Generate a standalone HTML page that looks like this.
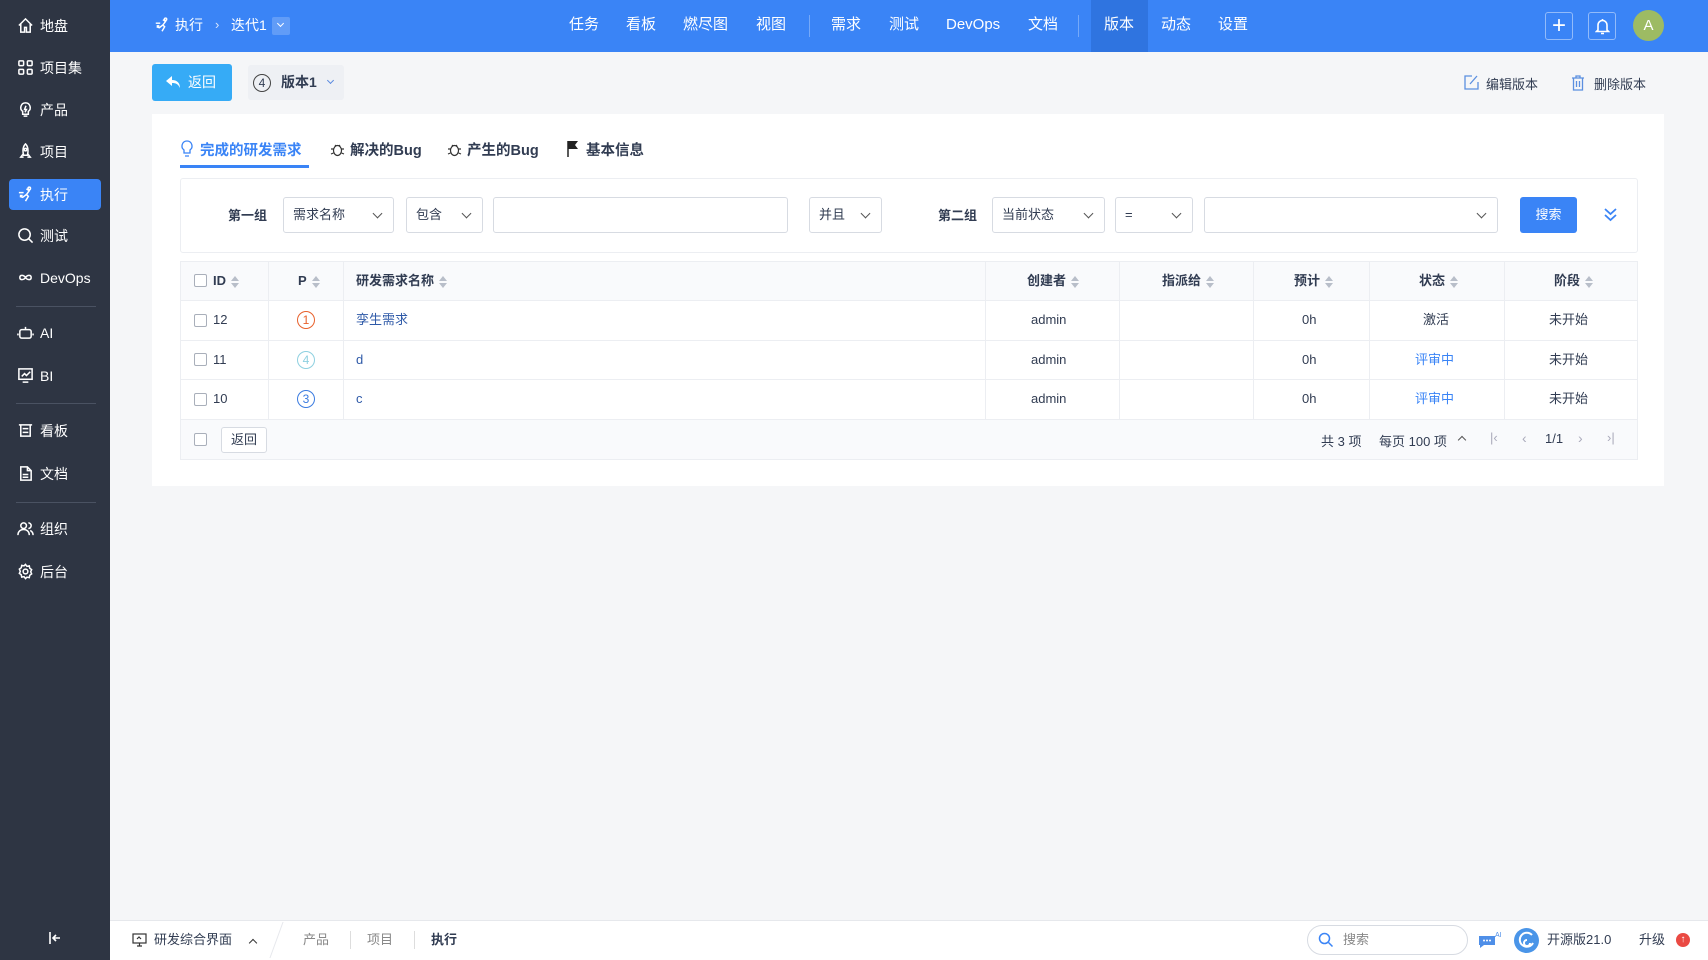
<!DOCTYPE html>
<html><head><meta charset="utf-8">
<style>
*{margin:0;padding:0;box-sizing:border-box}
body{width:1708px;height:960px;overflow:hidden;background:#f5f6f8;font-family:"Liberation Sans","Noto Sans CJK SC",sans-serif;font-size:14px;color:#313c52;position:relative}
.a{position:absolute}
#side{left:0;top:0;width:110px;height:960px;background:#2e3543}
.si{position:absolute;left:9px;width:92px;height:31px;color:#fff;font-size:14px;display:flex;align-items:center;padding-left:8px;gap:6px}
.si svg{width:17px;height:17px;stroke:#fff;fill:none;stroke-width:1.6}
.si.act{background:#3a84f6;border-radius:4px}
.sd{position:absolute;left:16px;width:80px;height:1px;background:#4a5262}
#top{left:110px;top:0;width:1598px;height:52px;background:#3a84f6;color:#fff}
.nav{position:absolute;top:0;height:52px;line-height:50px;font-size:15px;color:#fff}
.vs{position:absolute;top:15px;width:1px;height:22px;background:rgba(255,255,255,.3)}
.card{background:#fff}
.sel{position:absolute;top:197px;height:36px;border:1px solid #d7dbe2;border-radius:3px;background:#fff;font-size:13px;padding-left:9px;line-height:34px;color:#313c52}
.sel:after{content:"";position:absolute;right:12px;top:12px;width:6px;height:6px;border-right:1.3px solid #555;border-bottom:1.3px solid #555;transform:rotate(45deg)}
.sel.noarr:after{display:none}
.cb{position:absolute;width:13px;height:13px;border:1px solid #a9afba;border-radius:2px;background:#fff}
.th{position:absolute;top:261px;height:39px;line-height:39px;font-weight:bold;font-size:13px}
.td{position:absolute;height:39px;line-height:39px;font-size:13px}
.sort{display:inline-block;width:8px;height:12px;vertical-align:middle;margin-left:5px;position:relative}
.sort:before{content:"";position:absolute;left:0;top:0;border:4px solid transparent;border-bottom:5px solid #b8bec9;border-top:0}
.sort:after{content:"";position:absolute;left:0;top:7px;border:4px solid transparent;border-top:5px solid #b8bec9;border-bottom:0}
.vl{position:absolute;width:1px;background:#eceef2}
.hl{position:absolute;height:1px;background:#eceef2;left:180px;width:1458px}
.pc{position:absolute;width:18px;height:18px;border-radius:50%;border:1.3px solid;font-size:12px;line-height:16px;text-align:center}
.ft{position:absolute;top:920px;height:40px;line-height:40px;font-size:13px}
</style></head><body>
<div id="side" class="a">
 <div class="si" style="top:10px"><svg viewBox="0 0 18 18"><path d="M2 9 9 2l7 7M4 7v9h4v-5h2v5h4V7"/></svg>地盘</div>
 <div class="si" style="top:52px"><svg viewBox="0 0 18 18"><rect x="2" y="2" width="5" height="5" rx="1"/><rect x="11" y="2" width="5" height="5" rx="1"/><rect x="2" y="11" width="5" height="5" rx="1"/><rect x="11" y="11" width="5" height="5" rx="1"/></svg>项目集</div>
 <div class="si" style="top:94px"><svg viewBox="0 0 18 18"><path d="M9 2a5 5 0 0 0-3 9v3h6v-3a5 5 0 0 0-3-9zM7 16h4M9.5 5 8 9h2l-1.5 3"/></svg>产品</div>
 <div class="si" style="top:136px"><svg viewBox="0 0 18 18"><path d="M9 1c3 3 3 8 2 12H7C6 9 6 4 9 1zM7 11l-3 4h3M11 11l3 4h-3"/><circle cx="9" cy="7" r="1.3"/></svg>项目</div>
 <div class="si act" style="top:179px"><svg viewBox="0 0 18 18"><path d="M10 3l3 2-3 4 2 2-3 5M10 9l-4 3-3-1M2 7h5M3 10h3"/><circle cx="13" cy="2.5" r="1.3"/></svg>执行</div>
 <div class="si" style="top:220px"><svg viewBox="0 0 18 18"><circle cx="8" cy="8" r="6"/><path d="m12.5 12.5 4 4"/></svg>测试</div>
 <div class="si" style="top:262px"><svg viewBox="0 0 18 18"><path d="M9 9c-2-3-6-3-6 0s4 3 6 0 6-3 6 0-4 3-6 0"/></svg>DevOps</div>
 <div class="sd" style="top:306px"></div>
 <div class="si" style="top:317px"><svg viewBox="0 0 18 18"><rect x="3" y="6" width="12" height="9" rx="2"/><path d="M9 6V3M7 10h0M11 10h0M1 10v2M17 10v2"/></svg>AI</div>
 <div class="si" style="top:360px"><svg viewBox="0 0 18 18"><rect x="2" y="2" width="14" height="11"/><path d="M5 10l3-3 2 2 4-4M6 16h6"/></svg>BI</div>
 <div class="sd" style="top:403px"></div>
 <div class="si" style="top:415px"><svg viewBox="0 0 18 18"><path d="M2 3h14M4 3v12h10V3M6 7h6M6 11h6"/></svg>看板</div>
 <div class="si" style="top:458px"><svg viewBox="0 0 18 18"><path d="M4 2h7l4 4v10H4zM11 2v4h4M6 10h6M6 13h6"/></svg>文档</div>
 <div class="sd" style="top:502px"></div>
 <div class="si" style="top:513px"><svg viewBox="0 0 18 18"><circle cx="7" cy="6" r="3"/><path d="M1 16c0-4 3-6 6-6s6 2 6 6M12 3a3 3 0 0 1 0 6M14 11c2 1 3 3 3 5"/></svg>组织</div>
 <div class="si" style="top:556px"><svg viewBox="0 0 18 18"><circle cx="9" cy="9" r="2.5"/><path d="M9 1.5l1.5 2 2.5-.5.5 2.5 2 1.5-1 2.3 1 2.2-2 1.5-.5 2.5-2.5-.5L9 16.5l-1.5-2-2.5.5-.5-2.5-2-1.5 1-2.2-1-2.3 2-1.5.5-2.5 2.5.5z"/></svg>后台</div>
 <svg class="a" style="left:48px;top:931px" width="14" height="14" viewBox="0 0 14 14" fill="none" stroke="#fff" stroke-width="1.6"><path d="M2 1v12M12 7H5M8 4 5 7l3 3"/></svg>
</div>

<div id="top" class="a">
 <svg class="a" style="left:44px;top:17px" width="16" height="16" viewBox="0 0 18 18" fill="none" stroke="#fff" stroke-width="1.6"><path d="M10 3l3 2-3 4 2 2-3 5M10 9l-4 3-3-1M2 7h5M3 10h3"/><circle cx="13" cy="2.5" r="1.3"/></svg>
 <div class="nav" style="left:65px;font-size:14px">执行</div>
 <div class="nav" style="left:105px;font-size:13px;opacity:.8">›</div>
 <div class="nav" style="left:121px;font-size:14px">迭代1</div>
 <div class="a" style="left:162px;top:17px;width:18px;height:18px;background:rgba(255,255,255,.2);border-radius:2px"><div style="position:absolute;left:6px;top:4px;width:5px;height:5px;border-right:1.2px solid #fff;border-bottom:1.2px solid #fff;transform:rotate(45deg)"></div></div>
 <div class="nav" style="left:459px">任务</div>
 <div class="nav" style="left:516px">看板</div>
 <div class="nav" style="left:573px">燃尽图</div>
 <div class="nav" style="left:646px">视图</div>
 <div class="vs" style="left:699px"></div>
 <div class="nav" style="left:721px">需求</div>
 <div class="nav" style="left:779px">测试</div>
 <div class="nav" style="left:836px">DevOps</div>
 <div class="nav" style="left:918px">文档</div>
 <div class="vs" style="left:968px"></div>
 <div class="a" style="left:981px;top:0;width:57px;height:52px;background:#2f74e0"></div>
 <div class="nav" style="left:994px">版本</div>
 <div class="nav" style="left:1051px">动态</div>
 <div class="nav" style="left:1108px">设置</div>
 <div class="a" style="left:1435px;top:12px;width:28px;height:28px;border:1px solid rgba(255,255,255,.45);border-radius:3px;font-size:24px;line-height:25px;text-align:center">+</div>
 <div class="a" style="left:1478px;top:12px;width:28px;height:28px;border:1px solid rgba(255,255,255,.45);border-radius:3px"><svg style="position:absolute;left:6px;top:5px" width="15" height="17" viewBox="0 0 15 17" fill="none" stroke="#fff" stroke-width="1.6"><path d="M3 12V7a4.5 4.5 0 0 1 9 0v5l1.5 1.5h-12zM6 15.5h3M7.5 1v1"/></svg></div>
 <div class="a" style="left:1523px;top:10px;width:31px;height:31px;border-radius:50%;background:#9dbb63;text-align:center;line-height:31px;font-size:15px">A</div>
</div>

<div class="a" style="left:152px;top:64px;width:80px;height:37px;background:#36abf6;border-radius:3px;color:#fff;font-size:14px;line-height:37px;padding-left:36px">返回
 <svg style="position:absolute;left:14px;top:12px" width="15" height="13" viewBox="0 0 15 13" fill="#fff"><path d="M6 0 0 5l6 5V7c4 0 6 1 8 5 0-5-3-8-8-8z"/></svg></div>
<div class="a" style="left:248px;top:65px;width:96px;height:35px;background:#eef0f4;border-radius:3px">
 <div class="a" style="left:5px;top:9px;width:18px;height:18px;border:1.2px solid #444;border-radius:50%;text-align:center;font-size:12px;line-height:16px">4</div>
 <div class="a" style="left:33px;top:0;line-height:35px;font-weight:bold;font-size:14px">版本1</div>
 <div class="a" style="left:80px;top:13px;width:5px;height:5px;border-right:1.2px solid #5a8ae0;border-bottom:1.2px solid #5a8ae0;transform:rotate(45deg)"></div>
</div>
<svg class="a" style="left:1464px;top:75px" width="15" height="15" viewBox="0 0 15 15" fill="none" stroke="#5b8fe0" stroke-width="1.3"><path d="M8 1H1v13h13V7M6 9l7-8"/></svg>
<div class="a" style="left:1486px;top:74px;font-size:13px">编辑版本</div>
<svg class="a" style="left:1571px;top:75px" width="14" height="16" viewBox="0 0 14 16" fill="none" stroke="#5b8fe0" stroke-width="1.3"><path d="M1 3h12M5 3V1h4v2M2.5 3v12h9V3M5.5 6v6M8.5 6v6"/></svg>
<div class="a" style="left:1594px;top:74px;font-size:13px">删除版本</div>

<div class="a card" style="left:152px;top:114px;width:1512px;height:372px"></div>
<svg class="a" style="left:180px;top:140px" width="14" height="18" viewBox="0 0 14 18" fill="none" stroke="#3a84f6" stroke-width="1.3"><path d="M7 1a5 5 0 0 0-3 9v3h6v-3a5 5 0 0 0-3-9zM5 16h4"/></svg>
<div class="a" style="left:200px;top:139px;color:#3a84f6;font-weight:bold;font-size:14.5px">完成的研发需求</div>
<div class="a" style="left:180px;top:165px;width:129px;height:3px;background:#3a84f6"></div>
<svg class="a" style="left:330px;top:141px" width="15" height="16" viewBox="0 0 15 16" fill="none" stroke="#333" stroke-width="1.2"><ellipse cx="7.5" cy="9.5" rx="4" ry="5"/><path d="M5 4l1 1M10 4 9 5M1 8h2.5M11.5 8H14M1 13l2.5-1M14 13l-2.5-1"/></svg>
<div class="a" style="left:350px;top:139px;font-weight:bold;font-size:14.5px">解决的Bug</div>
<svg class="a" style="left:447px;top:141px" width="15" height="16" viewBox="0 0 15 16" fill="none" stroke="#333" stroke-width="1.2"><ellipse cx="7.5" cy="9.5" rx="4" ry="5"/><path d="M5 4l1 1M10 4 9 5M1 8h2.5M11.5 8H14M1 13l2.5-1M14 13l-2.5-1"/></svg>
<div class="a" style="left:467px;top:139px;font-weight:bold;font-size:14.5px">产生的Bug</div>
<svg class="a" style="left:566px;top:140px" width="14" height="17" viewBox="0 0 14 17"><path d="M2 1v16" stroke="#222" stroke-width="1.5"/><path d="M2 1h10l-3 4 3 4H2z" fill="#222"/></svg>
<div class="a" style="left:586px;top:139px;font-weight:bold;font-size:14.5px">基本信息</div>

<div class="a" style="left:180px;top:178px;width:1458px;height:75px;border:1px solid #eceef2;border-radius:3px;background:#fff"></div>
<div class="a" style="left:228px;top:205px;font-weight:bold;font-size:13px">第一组</div>
<div class="sel" style="left:283px;width:111px">需求名称</div>
<div class="sel" style="left:406px;width:77px">包含</div>
<div class="sel noarr" style="left:493px;width:295px"></div>
<div class="sel" style="left:809px;width:73px">并且</div>
<div class="a" style="left:938px;top:205px;font-weight:bold;font-size:13px">第二组</div>
<div class="sel" style="left:992px;width:113px">当前状态</div>
<div class="sel" style="left:1115px;width:78px">=</div>
<div class="sel" style="left:1204px;width:294px"></div>
<div class="a" style="left:1520px;top:197px;width:57px;height:36px;background:#3a84f6;border-radius:3px;color:#fff;text-align:center;line-height:36px;font-size:13px">搜索</div>
<svg class="a" style="left:1604px;top:207px" width="13" height="15" viewBox="0 0 13 15" fill="none" stroke="#3a84f6" stroke-width="1.8"><path d="M1 2l5.5 5L12 2M1 8l5.5 5L12 8"/></svg>

<div class="a" style="left:180px;top:261px;width:1458px;height:199px;border:1px solid #eceef2;background:#fff"></div>
<div class="a" style="left:181px;top:262px;width:1456px;height:38px;background:#f9fafc"></div>
<div class="a" style="left:181px;top:420px;width:1456px;height:39px;background:#f9fafc"></div>
<div class="hl" style="top:300px"></div><div class="hl" style="top:340px"></div><div class="hl" style="top:379px"></div><div class="hl" style="top:419px"></div>
<div class="vl" style="left:268px;top:262px;height:157px"></div>
<div class="vl" style="left:343px;top:262px;height:157px"></div>
<div class="vl" style="left:985px;top:262px;height:157px"></div>
<div class="vl" style="left:1119px;top:262px;height:157px"></div>
<div class="vl" style="left:1253px;top:262px;height:157px"></div>
<div class="vl" style="left:1369px;top:262px;height:157px"></div>
<div class="vl" style="left:1504px;top:262px;height:157px"></div>

<div class="cb" style="left:194px;top:274px"></div>
<div class="th" style="left:213px">ID<span class="sort"></span></div>
<div class="th" style="left:298px">P<span class="sort"></span></div>
<div class="th" style="left:356px">研发需求名称<span class="sort"></span></div>
<div class="th" style="left:1027px">创建者<span class="sort"></span></div>
<div class="th" style="left:1162px">指派给<span class="sort"></span></div>
<div class="th" style="left:1294px">预计<span class="sort"></span></div>
<div class="th" style="left:1419px">状态<span class="sort"></span></div>
<div class="th" style="left:1554px">阶段<span class="sort"></span></div>

<div class="cb" style="left:194px;top:314px"></div><div class="td" style="left:213px;top:300px">12</div>
<div class="pc" style="left:297px;top:311px;color:#e8612c;border-color:#e8612c">1</div>
<div class="td" style="left:356px;top:300px;color:#2f5aa8">孪生需求</div>
<div class="td" style="left:1031px;top:300px">admin</div><div class="td" style="left:1302px;top:300px">0h</div>
<div class="td" style="left:1423px;top:300px">激活</div><div class="td" style="left:1549px;top:300px">未开始</div>

<div class="cb" style="left:194px;top:353px"></div><div class="td" style="left:213px;top:340px">11</div>
<div class="pc" style="left:297px;top:351px;color:#8ed0e0;border-color:#8ed0e0">4</div>
<div class="td" style="left:356px;top:340px;color:#2f5aa8">d</div>
<div class="td" style="left:1031px;top:340px">admin</div><div class="td" style="left:1302px;top:340px">0h</div>
<div class="td" style="left:1415px;top:340px;color:#3a84f6">评审中</div><div class="td" style="left:1549px;top:340px">未开始</div>

<div class="cb" style="left:194px;top:393px"></div><div class="td" style="left:213px;top:379px">10</div>
<div class="pc" style="left:297px;top:390px;color:#3a7be0;border-color:#3a7be0">3</div>
<div class="td" style="left:356px;top:379px;color:#2f5aa8">c</div>
<div class="td" style="left:1031px;top:379px">admin</div><div class="td" style="left:1302px;top:379px">0h</div>
<div class="td" style="left:1415px;top:379px;color:#3a84f6">评审中</div><div class="td" style="left:1549px;top:379px">未开始</div>

<div class="cb" style="left:194px;top:433px"></div>
<div class="a" style="left:221px;top:427px;width:46px;height:26px;border:1px solid #d7dbe2;border-radius:3px;background:#fff;text-align:center;line-height:24px;font-size:13px">返回</div>
<div class="a" style="left:1321px;top:431px;font-size:13px">共 3 项</div>
<div class="a" style="left:1379px;top:431px;font-size:13px">每页 100 项</div>
<div class="a" style="left:1459px;top:437px;width:6px;height:6px;border-left:1.3px solid #555;border-top:1.3px solid #555;transform:rotate(45deg)"></div>
<div class="a" style="left:1490px;top:430px;color:#aab;font-size:13px">|‹</div>
<div class="a" style="left:1522px;top:430px;color:#aab;font-size:14px">‹</div>
<div class="a" style="left:1545px;top:431px;font-size:13px">1/1</div>
<div class="a" style="left:1578px;top:430px;color:#aab;font-size:14px">›</div>
<div class="a" style="left:1607px;top:430px;color:#aab;font-size:13px">›|</div>

<div class="a" style="left:110px;top:920px;width:1598px;height:40px;background:#fff;border-top:1px solid #e6e8ec"></div>
<svg class="a" style="left:132px;top:933px" width="15" height="14" viewBox="0 0 15 14" fill="none" stroke="#333" stroke-width="1.2"><rect x="1" y="1" width="13" height="9"/><path d="M5 13h5M7.5 10v3M5 6l2-2 2 2"/></svg>
<div class="ft" style="left:154px">研发综合界面</div>
<div class="a" style="left:250px;top:940px;width:6px;height:6px;border-left:1.3px solid #333;border-top:1.3px solid #333;transform:rotate(45deg)"></div>
<div class="a" style="left:276px;top:922px;width:1px;height:36px;background:#e6e8ec;transform:skewX(-20deg)"></div>
<div class="ft" style="left:303px;color:#888">产品</div>
<div class="a" style="left:350px;top:931px;width:1px;height:18px;background:#ddd"></div>
<div class="ft" style="left:367px;color:#888">项目</div>
<div class="a" style="left:414px;top:931px;width:1px;height:18px;background:#ddd"></div>
<div class="ft" style="left:431px;font-weight:bold">执行</div>
<div class="a" style="left:1307px;top:925px;width:161px;height:30px;border:1px solid #d7dbe2;border-radius:15px;background:#fff"></div>
<svg class="a" style="left:1318px;top:932px" width="16" height="16" viewBox="0 0 16 16" fill="none" stroke="#3a84f6" stroke-width="1.5"><circle cx="6.5" cy="6.5" r="5"/><path d="m10.5 10.5 4 4"/></svg>
<div class="ft" style="left:1343px;color:#888">搜索</div>
<svg class="a" style="left:1477px;top:930px" width="26" height="20" viewBox="0 0 26 20"><path d="M2 6h16v9H7l-4 3v-3H2z" fill="#4f8fe8"/><circle cx="7" cy="10.5" r="1" fill="#fff"/><circle cx="10" cy="10.5" r="1" fill="#fff"/><circle cx="13" cy="10.5" r="1" fill="#fff"/><text x="18" y="7" font-size="7" fill="#4f8fe8" font-family="Liberation Sans">AI</text></svg>
<div class="a" style="left:1514px;top:928px;width:25px;height:25px;border-radius:50%;background:#4a95e8"><svg width="25" height="25" viewBox="0 0 25 25" fill="none" stroke="#fff" stroke-width="2"><path d="M18 7a7 7 0 1 0 1 8M13 12a3 3 0 1 0 3 3"/></svg></div>
<div class="ft" style="left:1547px">开源版21.0</div>
<div class="ft" style="left:1639px">升级</div>
<div class="a" style="left:1676px;top:933px;width:14px;height:14px;border-radius:50%;background:#ea4a43;color:#fff;font-size:10px;line-height:14px;text-align:center;font-weight:bold">↑</div>
</body></html>
